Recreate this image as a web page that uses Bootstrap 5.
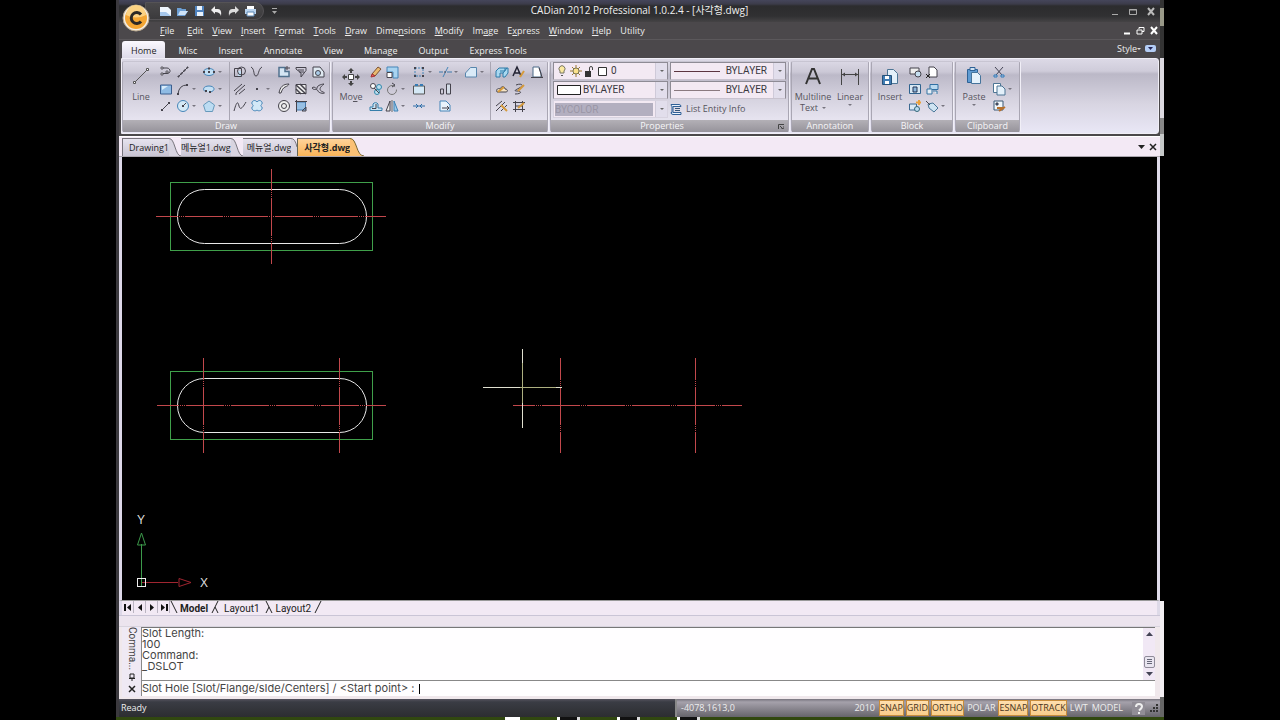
<!DOCTYPE html>
<html lang="en">
<head>
<meta charset="utf-8">
<meta name="viewport" content="width=device-width, initial-scale=1">
<title>CADian 2012 Professional 1.0.2.4 - [사각형.dwg]</title>
<link href="https://cdn.jsdelivr.net/npm/bootstrap@5.3.0/dist/css/bootstrap.min.css" rel="stylesheet">
<style>
:root{--ui:"Open Sans","Noto Sans CJK KR",sans-serif;--thin:Roboto,"Noto Sans CJK KR",sans-serif}
body{background:#000;font:9px/12px var(--ui);color:#eee}
button,select,input{font:inherit;color:inherit;background:none;border:0;padding:0;margin:0;border-radius:0}
a{color:inherit;text-decoration:none}
svg{display:block;flex:none}
.stage{height:100vh;padding:0 116px}
.work{min-height:0}
.behind{width:4px;background:linear-gradient(#333 0 8px,#998 8px 26px,#333 26px 58px,#dcd9e0 58px 118px,#888 118px 134px,#c5c8c8 134px 156px,#000 156px 601px,#f3eff3 601px 697px,#666 697px)}
.app{background:#4b484b;border-left:3px solid #3b393e;min-width:0}
.app-title{height:22px;background:linear-gradient(#45465b,#3c3c4a 4px,#2c2c2e 6px,#303032 16px,#454345 22px);font-size:10px;line-height:20px;color:#f0f0f0}
.quick{height:18px;margin-left:26px;margin-top:2px;padding:0 6px 0 13px;gap:4px;border-radius:0 9px 9px 0;background:linear-gradient(#4a494b,#3b3a3c);border:1px solid #555356}
.orb{left:3px;top:4px;width:28px;height:28px;z-index:3}
.app-menu{height:18px;gap:9px;padding:0 2px 0 41px;line-height:18px;border-bottom:1px solid #5b585b}
.app-menu a:first-child{margin-right:4px}
.app-menu u{text-underline-offset:1px}
.app-tabs{height:18px;line-height:22px}
.app-tabs a{padding:0 11px 0 10px}
.app-tabs a.on{background:linear-gradient(#fbf9ff,#dedbe9);color:#222;border-radius:3px 3px 0 0;padding:0 9px;margin:1px 3px 0 3px;line-height:20px}
.ribbon{height:76px;padding:2px 0 1px;gap:2px;margin:0 1px 0 2px;border:1px solid #f0eef6;border-radius:0 3px 3px 0;background:linear-gradient(#dcd9e6,#cfccda 12px,#bbb8c7 15px,#d8d5e2 45px,#e9e7f6)}
.panel{border:1px solid #a9a6b3;border-top-color:#c8c5d2;border-radius:2px;background:linear-gradient(#dad7e4,#cbc8d6 10px,#bcb9c8 13px,#d5d2df 36px,#e6e3ef 57px);box-shadow:1px 0 #f1eff7;color:#55535c}
.panel-body{height:58px}
.panel h2{font:9px/11px var(--ui);margin:0;height:12px;text-align:center;color:#f6f5f8;background:linear-gradient(#b3b0b6,#96939b)}
.w-draw{width:208px}.w-mod{width:216px}.w-prop{width:239px}.w-ann{width:78px}.w-blk{width:82px}.w-clip{width:65px}
.w-prop h2{padding-right:15px}
.big{line-height:12px;padding-top:3px;width:36px;display:flex;flex-direction:column;align-items:center}
.big svg{margin-bottom:4px}
.big .two{line-height:11px}
.big.wide{width:42px}.big.mid{width:32px}
.tools{display:grid;grid-auto-rows:17px;align-content:start;padding-top:1px}
.tools button{display:flex;align-items:center;height:17px;gap:2px}
.tools svg{fill:none;stroke:#45434c}
.car::after{content:"";border:2px solid transparent;border-top-color:#77747f;border-bottom:0}
.big.car::after{margin-top:2px}
.lightcar::after{border-top-color:#ddd}
.g-draw1{grid-template-columns:17px 26px 27px}
.g-draw2{grid-template-columns:17px 27px 17px 17px 14px;padding-left:3px;border-left:1px solid #a9a6b3}
.g-mod1{grid-template-columns:16px 27px 26px 26px 26px}
.g-mod2{grid-template-columns:17px 18px 14px;padding-left:4px;border-left:1px solid #a9a6b3}
.g-blk{grid-template-columns:17px 24px}
.props{display:grid;grid-template-columns:115px 116px;gap:1px 2px;padding:0 2px;align-content:start}
.combo{height:18px;background:#f3e9f3;border:1px solid #8e8b95;border-bottom-color:#c9c3cf;display:flex;align-items:center;padding-left:3px;gap:2px;font:10px/14px var(--thin);color:#3a383e}
.combo select{appearance:none;flex:1;min-width:0}
.combo.off{color:#9a96a6;border-color:#d8d3e0;padding-left:1px}
.combo.off select{background:#b3afc0;opacity:1;height:13px;line-height:13px}
.drop{width:12px;align-self:stretch;background:#e2deec;display:flex;align-items:center;justify-content:center;border-left:1px solid #cfcad9}
.drop::after{content:"";border:2px solid transparent;border-top-color:#666;border-bottom:0}
.rightsel{text-align:right;padding-right:4px}
.docbar{height:21px;margin-top:2px;padding:1px 2px 0 3px;background:#f3e9f5;border-bottom:1px solid #aaa6ae;color:#222;border-top:1px solid #fff}
.doctab{height:18px;background:linear-gradient(#e6e3ee,#c9c5d3);border-top:1px solid #77747c;line-height:18px;padding-left:6px}
.doctab:first-child{border-left:1px solid #77747c}
.doctab.on{background:linear-gradient(#ffd39a,#f9b458);border-left:1px solid #665;font-weight:700}
.inset-x{border-left:3px solid #ddd8e8;border-right:3px solid #dedae8}
.draw{background:#000;min-height:0;overflow:hidden}
.ucs{left:10px;bottom:0}
.sheets{height:15px;background:#f2e9f4;color:#222;border-top:1px solid #999}
.nav4 button{width:12px;height:12px;border-right:1px solid #bbb5c2;display:flex;align-items:center;justify-content:center}
.sheetname{font:10px/13px var(--thin);padding:0 2px}
.splitter{height:12px;background:#ece4ee;border-top:1px solid #cac5d6;border-bottom:1px solid #d8d4de}
.cmd{height:72px;background:#f0e8ec;color:#444;padding:0 5px 2px 3px;font:11px/11px Inter,sans-serif}
.cmd-side{width:19px;background:#efe9f4;font:10px/11px var(--thin)}
.vt{writing-mode:vertical-rl;line-height:12px;height:42px}
.hist{height:54px;border-top:1px solid #777;border-bottom:1px solid #888;border-left:1px solid #888;background:#fffeff}
.hist p{margin:0}
.scroll{width:12px;background:#f1e8f5}
.thumb{width:11px;height:12px;border:1px solid #8f8b99;border-radius:2px;background:#e9e5f0}
.prompt{height:15px;background:#fffeff;border-left:1px solid #888}
.prompt input{border-left:1px solid #000;height:10px;min-width:0;margin-left:5px;outline:0}
.status{height:18px;line-height:18px;background:linear-gradient(#55535e,#3a3c44 3px,#2c2d30);color:#eee}
.status .left{width:556px;padding-left:2px;flex:0 1 556px}
.status .right{background:linear-gradient(#77747e,#a5a1ab 3px,#66646b);border-left:2px solid #888;padding:0 1px 0 4px}
.modes{gap:2px}
.modes button{height:16px;line-height:14px;border:1px solid transparent}
.modes button.on{background:linear-gradient(#ffdfae,#f8cd8c);color:#4a3520;border-color:#c78c3b}
.wall{height:3px;background:#31480f;padding-left:389px;gap:37px}
.wall i{height:3px;background:linear-gradient(90deg,#fff 3px,#111 3px 20px,#ddd 20px);width:23px}
.wall i:first-child{background:#fff;width:15px}
</style>
</head>
<body>
<svg width="0" height="0" class="position-absolute" aria-hidden="true">
<defs>
<symbol id="pline" viewBox="0 0 14 14"><path d="M3 3h5a3 3 0 0 1 3 3.500a3 3 0 0 1-3 2H3"/><path d="M2 2h2v2H2zM2 8h2v2H2zM7 6h2v2H7z" fill="#ddd" stroke-width=".8"/></symbol>
<symbol id="xline" viewBox="0 0 14 14"><path d="M2 12L12 2"/><path d="M2 11h1v1H2zM11 2h1v1h-1zM5 8h1v1H5zM8 5h1v1H8z" fill="#555"/></symbol>
<symbol id="ell" viewBox="0 0 14 14"><ellipse cx="7" cy="7" rx="5.500" ry="3.500" fill="#c4e0f4" stroke="#4585b8"/><path d="M1 7h2M11 7h2M6 3.500h2M6 7h2" stroke-width="2"/></symbol>
<symbol id="rect" viewBox="0 0 14 14"><path d="M1.500 3h11v9h-11z" fill="#8fbbe4" stroke="#3c5f8f"/><path d="M3 4h6L3 8z" fill="#d9ecfa" stroke="none"/></symbol>
<symbol id="arc" viewBox="0 0 14 14"><path d="M2 12Q3 3 11 3"/><path d="M1 12h2M10 3h2" stroke-width="2"/></symbol>
<symbol id="earc" viewBox="0 0 14 14"><path d="M4 10C0 8 1 4 7 4s7 5 1 6" stroke="#4585b8" fill="#c4e0f4"/><path d="M3 9h2M7 10h2" stroke-width="2"/></symbol>
<symbol id="seg" viewBox="0 0 14 14"><path d="M3 11l7-7"/><path d="M2 11h2M9 4h2" stroke-width="2"/></symbol>
<symbol id="circ" viewBox="0 0 14 14"><circle cx="7" cy="7" r="5.500" fill="#d5e9f6" stroke="#4585b8"/><path d="M7 7l3-3"/><path d="M6 7h2" stroke-width="2"/></symbol>
<symbol id="pent" viewBox="0 0 14 14"><path d="M7 2l5.500 4-2 6.500h-7l-2-6.500z" fill="#bcdcf2" stroke="#6699bb"/></symbol>
<symbol id="region" viewBox="0 0 14 14"><path d="M5 6h4v5H5z" fill="#c4e0f4" stroke="none"/><path d="M1.500 3.500h7v8h-7z"/><circle cx="8.500" cy="6" r="4"/></symbol>
<symbol id="vee" viewBox="0 0 14 14"><path d="M1 2c4 2 2 9 5 9s2-7 6-9"/></symbol>
<symbol id="hatchl" viewBox="0 0 14 14"><path d="M1 9l8-7M3 11l9-8M6 12l6-5M2 12h2"/></symbol>
<symbol id="pt" viewBox="0 0 14 14"><path d="M6 7h2" stroke-width="2"/></symbol>
<symbol id="spl" viewBox="0 0 14 14"><path d="M1 12C4 1 5 3 6 7s3 3 7-4"/></symbol>
<symbol id="cloud" viewBox="0 0 14 14"><path d="M7 3c2-3 6-1 5 2-1 1-2 2 0 3 1 3-3 5-5 3-2 2-6 0-5-3 2-1 1-2 0-3-1-3 3-5 5-2z" fill="#d2e8f7" stroke="#4585b8"/></symbol>
<symbol id="bound" viewBox="0 0 14 14"><path d="M2 2.500h6v4h4v5H2z" fill="#d5e6f4" stroke="#51718e" stroke-width="1.500"/><path d="M10 1v4M8 3h5"/></symbol>
<symbol id="filt" viewBox="0 0 14 14"><path d="M2 2.500h10v3L7 12V8L2 4zM4 5h6M5 7h5"/></symbol>
<symbol id="wipe" viewBox="0 0 14 14"><path d="M2 2h7l4 5v5H2z" fill="#dfe9f1"/><circle cx="7" cy="8" r="2.500" fill="#aacce8"/></symbol>
<symbol id="trace" viewBox="0 0 14 14"><path d="M2 11C3 5 6 2 12 2c-1 2-2 2-4 3s-3 3-4 6z" fill="#eee"/></symbol>
<symbol id="hatch" viewBox="0 0 14 14"><path d="M2 2.500h10v9H2z" fill="#eee"/><path d="M2 3l10 9M6 2l6 6M2 7l5 5" stroke-width="1.500"/></symbol>
<symbol id="sketch" viewBox="0 0 14 14"><path d="M1 6c3-3 5 3 5 0s6-4 7-4c-4 3-6 6-1 8s-4 2-5-1-4 0-6-3z"/></symbol>
<symbol id="donut" viewBox="0 0 14 14"><circle cx="7" cy="7" r="5.500" fill="#eee"/><circle cx="7" cy="7" r="2.500"/></symbol>
<symbol id="grad" viewBox="0 0 14 14"><path d="M2.500 3h9v8h-9z" fill="#96bfe4" stroke="#4376a9"/><path d="M1 2.500h12M2.500 1v12M8 12l4-4v4z"/></symbol>
<symbol id="erase" viewBox="0 0 14 14"><path d="M3 9l6-7 3 2-6 7z" fill="#e9ba70" stroke="#7c5030"/><path d="M3 9l3 2-4 1z" fill="#e66060" stroke="#a33"/></symbol>
<symbol id="scale" viewBox="0 0 14 14"><path d="M2 2h11v11H8V7H2z" fill="#a8d3f0" stroke="#4585b8"/><path d="M2 7.500h5v5H2z" fill="#fff"/></symbol>
<symbol id="stretch" viewBox="0 0 14 14"><path d="M3 3h8v8H3z" stroke="#4585b8" stroke-dasharray="2 1"/><path d="M2 3h2M10 3h2M2 11h2M10 11h2" stroke-width="2"/></symbol>
<symbol id="trim" viewBox="0 0 14 14"><path d="M1 7h4M9 7h5" stroke="#3d78ac"/><path d="M5 12l5-10" stroke="#4585b8"/><path d="M6 7h2"/></symbol>
<symbol id="chamf" viewBox="0 0 14 14"><path d="M1.500 12V8l5-5.500h6V12z" fill="#d9eaf7" stroke="#5886ad"/></symbol>
<symbol id="copy2" viewBox="0 0 14 14"><circle cx="4" cy="4" r="2.500" fill="#fff"/><circle cx="10" cy="5" r="2.500" fill="#bde" stroke="#38a"/><circle cx="8" cy="10" r="2.500" fill="#bde" stroke="#38a"/><path d="M5 6l5 5"/></symbol>
<symbol id="rot" viewBox="0 0 14 14"><circle cx="7" cy="8" r="4.500" stroke-dasharray="24 3" stroke="#777"/><path d="M7 1l3 2-3 2"/></symbol>
<symbol id="brk" viewBox="0 0 14 14"><path d="M1.500 4h11v8h-11z" fill="#d4e8f5" stroke="#555"/><path d="M3 3h3M8 3h3" stroke="#367bb4" stroke-width="2"/></symbol>
<symbol id="align" viewBox="0 0 14 14"><path d="M2.500 7h3v5h-3z"/><path d="M8.500 2h4v10h-4z" fill="#d4dce7"/></symbol>
<symbol id="offset" viewBox="0 0 14 14"><path d="M1 11.500h12V9H9V5a3 3 0 0 0-5 0v3H1z" fill="#cbe3f3" stroke="#357eaa"/><path d="M3 9.500h4V5"/></symbol>
<symbol id="mirror" viewBox="0 0 14 14"><path d="M5 2v10H1z" fill="#eee"/><path d="M9 2v10h4z" fill="#9cc9e9" stroke="#3c82b5"/><path d="M7 1v12" stroke="#666"/></symbol>
<symbol id="join" viewBox="0 0 14 14"><path d="M1 7h12M4 5l2 2-2 2M10 5L8 7l2 2" stroke="#2e6fa8"/></symbol>
<symbol id="length" viewBox="0 0 14 14"><path d="M2 2h6l4 4v6H2z" fill="#e8f3fb" stroke="#4585b8"/><path d="M4 9h7M9 7l2 2-2 2"/></symbol>
<symbol id="solid" viewBox="0 0 14 14"><path d="M1 6l3-3h9v5l-3 4H8V8H5v4H1z" fill="#a8d8f0" stroke="#2f7ba8"/><path d="M5 6h5V3M8 8l4-5" stroke="#2f7ba8"/></symbol>
<symbol id="aedit" viewBox="0 0 14 14"><path d="M1 11L5 2l4 9M3 8h5" stroke="#223" stroke-width="1.500"/><path d="M8 12l4-6" stroke="#d69a3b" stroke-width="2"/></symbol>
<symbol id="sheet" viewBox="0 0 14 14"><path d="M3 2h6l2 6v4H3z" fill="#fff" stroke="#4c6a88"/><path d="M1 12.500h12M9 3l3 9"/></symbol>
<symbol id="cedit" viewBox="0 0 14 14"><path d="M2 10c-1-3 1-4 3-3 1-3 5-3 5 0 3 0 3 3 1 3z" fill="#f5e4c6"/><path d="M3 10l6-5" stroke="#d69a3b" stroke-width="2"/></symbol>
<symbol id="sedit" viewBox="0 0 14 14"><path d="M4 3c5-2 8 0 5 2S0 9 5 9s5 3-2 3"/><path d="M6 9l6-6" stroke="#d69a3b" stroke-width="2"/></symbol>
<symbol id="hedit" viewBox="0 0 14 14"><path d="M1 7l6-5M1 12l9-9M6 12l6-6"/><path d="M6 6l6 6" stroke="#d69a3b" stroke-width="2"/></symbol>
<symbol id="gedit" viewBox="0 0 14 14"><path d="M1 3.500h12M1 10.500h12M3.500 2v11M10.500 2v11M3 7h7"/><path d="M6 9l6-5" stroke="#d69a3b" stroke-width="2"/></symbol>
<symbol id="b1" viewBox="0 0 14 14"><path d="M2 3h9v6H2z" fill="#eee"/><circle cx="10" cy="9" r="3" fill="#c5dff1"/></symbol>
<symbol id="b2" viewBox="0 0 14 14"><path d="M4 2h5l3 3v7H4z" fill="#fff"/><path d="M1 9l4 4M1 13l4-4" stroke="#222"/></symbol>
<symbol id="b3" viewBox="0 0 14 14"><path d="M1.500 2.500h11v9h-11z" fill="#d8e8f3" stroke="#2f638f"/><path d="M5 5h4v5H5z" fill="#8cb8dc" stroke="#235"/></symbol>
<symbol id="b4" viewBox="0 0 14 14"><path d="M5 2.500h8v5H5z" fill="#b9d9ef" stroke="#2f6fa3"/><path d="M2 7h5v5H2zM8 9h4v3" fill="#e6eef5" stroke="#3474a3"/></symbol>
<symbol id="b5" viewBox="0 0 14 14"><path d="M1.500 5h7v6h-7z" fill="#d9e8f3" stroke="#3c6a91"/><circle cx="9" cy="10" r="2.500" fill="#bdddf1" stroke="#367"/><path d="M11 1v5M8 3.500h5" stroke="#eaa13a" stroke-width="2"/></symbol>
<symbol id="b6" viewBox="0 0 14 14"><path d="M3 5l5-1 5 5-4 4-5-4z" fill="#cfe4f2" stroke="#4a7698"/><path d="M1 2l4 4"/></symbol>
<symbol id="cut" viewBox="0 0 14 14"><path d="M3 2l7 8M11 2l-7 8" stroke="#445"/><path d="M2 10h3v2H2zM9 10h3v2H9z" stroke="#2e7fc0"/></symbol>
<symbol id="cpy" viewBox="0 0 14 14"><path d="M1.500 1.500h7v9h-7z" fill="#fff" stroke="#4d7594"/><path d="M5 4h5l3 3v6H5z" fill="#e3f0fa" stroke="#4d7594"/></symbol>
<symbol id="mp" viewBox="0 0 14 14"><path d="M2 2h9v9H2z" fill="#eef6fb" stroke="#3b5875"/><path d="M4 4h2v2H4z" fill="#36a"/><path d="M5 9h6M7 12l6-4" stroke="#b6702c" stroke-width="2"/></symbol>
</defs>
</svg>

<div class="stage d-flex flex-column">
<div class="work d-flex flex-grow-1">
<div class="app d-flex flex-column flex-grow-1 position-relative">
  <button class="orb position-absolute" aria-label="Application menu"><svg width="28" height="28" viewBox="0 0 28 28"><circle cx="14" cy="14" r="13" fill="#f5efe6" stroke="#b9a88c"/><circle cx="14" cy="14" r="11" fill="#f3a634"/><path d="M4 11a10 10 0 0 1 20 0Q14 16 4 11" fill="#fbd283"/><path d="M19 10.500A5.500 5.500 0 1 0 19 17.500" fill="none" stroke="#2b2926" stroke-width="3"/></svg></button>

  <header class="app-title d-flex position-relative">
    <div class="quick d-flex align-items-center">
      <button aria-label="New"><svg width="13" height="12"><path d="M1 2h8l3 3v6H1z" fill="#eef5fd"/><path d="M1 7h6l5 4H1z" fill="#a6c7ec"/></svg></button>
      <button aria-label="Open"><svg width="13" height="12"><path d="M1 10V3h4l1 1h4v2h2l-3 5H1z" fill="#6d9fd4"/><path d="M4 6h8L9 10H2z" fill="#cfe3f7"/></svg></button>
      <button aria-label="Save"><svg width="13" height="12"><path d="M2 1h9v10H2z" fill="#4f83bf"/><path d="M4 1h5v4H4zM4 7h6v4H4z" fill="#eaf3fc"/></svg></button>
      <button aria-label="Undo"><svg width="13" height="12"><path d="M1 5l4-4v3h3q4 0 3 7-1-4-6-4v2z" fill="#eee"/></svg></button>
      <button aria-label="Redo"><svg width="13" height="12"><path d="M12 5L8 1v3H5Q1 4 2 11q1-4 6-4v2z" fill="#ddd"/></svg></button>
      <button aria-label="Print"><svg width="13" height="12"><path d="M3 1h7v4H3z" fill="#fff"/><path d="M1 4h11v5H1z" fill="#b9d3ee"/><path d="M3 7h7v4H3z" fill="#fff" stroke="#5d88b5"/></svg></button>
    </div>
    <button class="px-2" aria-label="Customize"><svg width="5" height="6"><path d="M0 .5h5" stroke="#aaa"/><path d="M0 3h5L2.500 6z" fill="#aaa"/></svg></button>
    <div class="position-absolute start-0 end-0 text-center pe-none">CADian 2012 Professional 1.0.2.4 - [사각형.dwg]</div>
    <div class="ms-auto d-flex align-items-center gap-2 pe-1">
      <button aria-label="Minimize"><svg width="10" height="9"><path d="M2 7.500h6" stroke="#aaa"/></svg></button>
      <button aria-label="Maximize"><svg width="10" height="9"><path d="M1.500 2.500h7v5h-7zM1 3h8" fill="none" stroke="#aaa"/></svg></button>
      <button aria-label="Close"><svg width="10" height="9"><path d="M2 1l6 7M8 1L2 8" stroke="#bbb" stroke-width="2"/></svg></button>
    </div>
  </header>

  <nav class="app-menu d-flex">
    <a href="#"><u>F</u>ile</a><a href="#"><u>E</u>dit</a><a href="#"><u>V</u>iew</a><a href="#"><u>I</u>nsert</a><a href="#">F<u>o</u>rmat</a><a href="#"><u>T</u>ools</a><a href="#"><u>D</u>raw</a><a href="#">Dime<u>n</u>sions</a><a href="#"><u>M</u>odify</a><a href="#">Im<u>a</u>ge</a><a href="#">E<u>x</u>press</a><a href="#"><u>W</u>indow</a><a href="#"><u>H</u>elp</a><a href="#">Utility</a>
    <div class="ms-auto d-flex align-items-center gap-1">
      <button aria-label="Minimize drawing"><svg width="9" height="9"><path d="M1 7.500h6" stroke="#fff" stroke-width="2"/></svg></button>
      <button aria-label="Restore drawing"><svg width="9" height="9"><path d="M3 3V1.500h5v4H6M1 4h5v4H1z" fill="none" stroke="#fff"/></svg></button>
      <button aria-label="Close drawing"><svg width="9" height="9"><path d="M2 1l6 7M8 1L2 8" stroke="#fff" stroke-width="2"/></svg></button>
    </div>
  </nav>

  <nav class="app-tabs d-flex">
    <a href="#" class="on">Home</a><a href="#">Misc</a><a href="#">Insert</a><a href="#">Annotate</a><a href="#">View</a><a href="#">Manage</a><a href="#">Output</a><a href="#">Express Tools</a>
    <div class="ms-auto d-flex align-items-center gap-1 pe-1"><button class="car lightcar d-flex align-items-center">Style</button>
    <button aria-label="Minimize ribbon"><svg width="11" height="8"><rect width="11" height="7" rx="2" fill="#b4cdf5"/><path d="M3 2h5L5.500 5z" fill="#225"/></svg></button></div>
  </nav>

  <div class="ribbon d-flex">
    <section class="panel w-draw">
      <div class="panel-body d-flex">
        <button class="big"><svg width="18" height="22"><path d="M3 17L15 5" stroke="#555"/><path d="M1.500 16.500h2v2h-2zM14.500 3.500h2v2h-2z" fill="#fff" stroke="#555"/></svg>Line</button>
        <div class="tools g-draw1">
          <button aria-label="Polyline"><svg width="14" height="14"><use href="#pline"/></svg></button><button aria-label="Infinite line"><svg width="14" height="14"><use href="#xline"/></svg></button><button class="car" aria-label="Ellipse"><svg width="14" height="14"><use href="#ell"/></svg></button>
          <button aria-label="Rectangle"><svg width="14" height="14"><use href="#rect"/></svg></button><button class="car" aria-label="Arc"><svg width="14" height="14"><use href="#arc"/></svg></button><button class="car" aria-label="Elliptical arc"><svg width="14" height="14"><use href="#earc"/></svg></button>
          <button aria-label="Ray"><svg width="14" height="14"><use href="#seg"/></svg></button><button class="car" aria-label="Circle"><svg width="14" height="14"><use href="#circ"/></svg></button><button class="car" aria-label="Polygon"><svg width="14" height="14"><use href="#pent"/></svg></button>
        </div>
        <div class="tools g-draw2">
          <button><svg width="14" height="14"><use href="#region"/></svg></button><button><svg width="14" height="14"><use href="#vee"/></svg></button><button><svg width="14" height="14"><use href="#bound"/></svg></button><button><svg width="14" height="14"><use href="#filt"/></svg></button><button><svg width="14" height="14"><use href="#wipe"/></svg></button>
          <button><svg width="14" height="14"><use href="#hatchl"/></svg></button><button class="car"><svg width="14" height="14"><use href="#pt"/></svg></button><button><svg width="14" height="14"><use href="#trace"/></svg></button><button><svg width="14" height="14"><use href="#hatch"/></svg></button><button><svg width="14" height="14"><use href="#sketch"/></svg></button>
          <button><svg width="14" height="14"><use href="#spl"/></svg></button><button><svg width="14" height="14"><use href="#cloud"/></svg></button><button><svg width="14" height="14"><use href="#donut"/></svg></button><button><svg width="14" height="14"><use href="#grad"/></svg></button>
        </div>
      </div>
      <h2>Draw</h2>
    </section>

    <section class="panel w-mod">
      <div class="panel-body d-flex">
        <button class="big"><svg width="20" height="22"><path d="M7.500 9.500h5v5h-5z" fill="#fff" stroke="#444"/><path d="M10 3l3 3h-2v2H9V6H7zM10 21l3-3h-2v-2H9v2H7zM1 12l3-3v2h2v2H4v2zM19 12l-3-3v2h-2v2h2v2z" fill="#444"/></svg><span>Mo<u>v</u>e</span></button>
        <div class="tools g-mod1">
          <button><svg width="14" height="14"><use href="#erase"/></svg></button><button><svg width="14" height="14"><use href="#scale"/></svg></button><button class="car"><svg width="14" height="14"><use href="#stretch"/></svg></button><button class="car"><svg width="14" height="14"><use href="#trim"/></svg></button><button class="car"><svg width="14" height="14"><use href="#chamf"/></svg></button>
          <button><svg width="14" height="14"><use href="#copy2"/></svg></button><button class="car"><svg width="14" height="14"><use href="#rot"/></svg></button><button><svg width="14" height="14"><use href="#brk"/></svg></button><button><svg width="14" height="14"><use href="#align"/></svg></button><span></span>
          <button><svg width="14" height="14"><use href="#offset"/></svg></button><button class="car"><svg width="14" height="14"><use href="#mirror"/></svg></button><button><svg width="14" height="14"><use href="#join"/></svg></button><button><svg width="14" height="14"><use href="#length"/></svg></button>
        </div>
        <div class="tools g-mod2">
          <button><svg width="14" height="14"><use href="#solid"/></svg></button><button><svg width="14" height="14"><use href="#aedit"/></svg></button><button><svg width="14" height="14"><use href="#sheet"/></svg></button>
          <button><svg width="14" height="14"><use href="#cedit"/></svg></button><button><svg width="14" height="14"><use href="#sedit"/></svg></button><span></span>
          <button><svg width="14" height="14"><use href="#hedit"/></svg></button><button><svg width="14" height="14"><use href="#gedit"/></svg></button>
        </div>
      </div>
      <h2>Modify</h2>
    </section>

    <section class="panel w-prop">
      <div class="panel-body props">
        <div class="combo"><svg width="52" height="14"><path d="M3 7a3 3 0 1 1 4 0v2H3z" fill="#fbe9a0" stroke="#776"/><path d="M4 11.500h2" stroke="#555"/><path d="M19 1v12M13 7h12M15 3l8 8M23 3l-8 8" stroke="#a07a30"/><circle cx="19" cy="7" r="3" fill="#fce28c" stroke="#775"/><path d="M28 7h6v6h-6z" fill="#333"/><path d="M32.500 7V4a1.500 1.500 0 0 1 3 0v2" fill="none" stroke="#444"/><path d="M41.500 3.500h8v8h-8z" fill="#fff" stroke="#333"/></svg><select aria-label="Layer"><option>0</option></select><span class="drop"></span></div>
        <div class="combo"><svg width="46" height="3"><path d="M0 1.500h46" stroke="#5c3540"/></svg><select class="rightsel" aria-label="Linetype"><option>BYLAYER</option></select><span class="drop"></span></div>
        <div class="combo"><svg width="24" height="12"><path d="M.5 1.500h23v9H.5z" fill="#fff" stroke="#222"/></svg><select aria-label="Color"><option>BYLAYER</option></select><span class="drop"></span></div>
        <div class="combo"><svg width="46" height="3"><path d="M0 1.500h46" stroke="#8a7a80"/></svg><select class="rightsel" aria-label="Lineweight"><option>BYLAYER</option></select><span class="drop"></span></div>
        <div class="combo off"><select aria-label="Plot style" disabled><option>BYCOLOR</option></select><span class="drop"></span></div>
        <button class="d-flex align-items-center gap-1"><svg width="12" height="12"><path d="M1 1.500h8q2 0 2 2H3v6h8v2H3q-2 0-2-2h1V3q-1 0-1-1.500z" fill="#eaf3fb" stroke="#2f5f96"/><path d="M5 5.500h5M5 7.500h5" stroke="#357"/></svg>List Entity Info</button>
      </div>
      <h2 class="position-relative">Properties<button class="position-absolute end-0 top-0 p-1" aria-label="Properties settings"><svg width="6" height="5"><path d="M.5 5V.5H6M2 2l3 3M6 2v3H3" fill="none" stroke="#444"/></svg></button></h2>
    </section>

    <section class="panel w-ann">
      <div class="panel-body d-flex">
        <button class="big wide"><svg width="18" height="22"><path d="M2 19L8 4h2l6 15M5 13.500h8" fill="none" stroke="#333" stroke-width="2"/></svg><span class="two">Multiline</span><span class="two car d-flex align-items-center gap-1">Text</span></button>
        <button class="big mid car"><svg width="20" height="22"><path d="M1.500 4v16M18.500 4v16M2 9.500h16" stroke="#444"/><path d="M2 9.500l3-2v4zM18 9.500l-3-2v4z" fill="#444"/></svg><span class="two">Linear</span></button>
      </div>
      <h2>Annotation</h2>
    </section>

    <section class="panel w-blk">
      <div class="panel-body d-flex">
        <button class="big"><svg width="18" height="22"><path d="M6.500 4.500h6l4 4v10h-10z" fill="#e3f0fa" stroke="#4d7594"/><path d="M1.500 10.500h9v9h-9z" fill="#3f7cb4" stroke="#25527c"/><path d="M4 11h4v3H4zM4 16h4v3H4z" fill="#fff"/></svg><span class="two">Insert</span></button>
        <div class="tools g-blk">
          <button><svg width="14" height="14"><use href="#b1"/></svg></button><button><svg width="14" height="14"><use href="#b2"/></svg></button>
          <button><svg width="14" height="14"><use href="#b3"/></svg></button><button><svg width="14" height="14"><use href="#b4"/></svg></button>
          <button><svg width="14" height="14"><use href="#b5"/></svg></button><button class="car"><svg width="14" height="14"><use href="#b6"/></svg></button>
        </div>
      </div>
      <h2>Block</h2>
    </section>

    <section class="panel w-clip">
      <div class="panel-body d-flex">
        <button class="big car"><svg width="18" height="22"><path d="M2.500 4.500h10v13h-10z" fill="#5f9bd2" stroke="#2e6296"/><path d="M5 2.500h5v3H5z" fill="#cfe2f3" stroke="#2e6296"/><path d="M6.500 7.500h6l3 3v8h-9z" fill="#e4f1fb" stroke="#46749c"/></svg><span class="two">Paste</span></button>
        <div class="tools">
          <button><svg width="14" height="14"><use href="#cut"/></svg></button><button class="car"><svg width="14" height="14"><use href="#cpy"/></svg></button><button><svg width="14" height="14"><use href="#mp"/></svg></button>
        </div>
      </div>
      <h2>Clipboard</h2>
    </section>
  </div>

  <nav class="docbar d-flex">
    <button class="doctab">Drawing1</button><svg width="12" height="18"><path d="M0 .5C6 0 6 18 12 18H0z" fill="#d8d4e0"/><path d="M0 .5C6 0 6 18 12 18" fill="none" stroke="#77747c"/></svg>
    <button class="doctab ps-0">메뉴얼1.dwg</button><svg width="12" height="18"><path d="M0 .5C6 0 6 18 12 18H0z" fill="#d8d4e0"/><path d="M0 .5C6 0 6 18 12 18" fill="none" stroke="#77747c"/></svg>
    <button class="doctab ps-1">메뉴얼.dwg</button><svg width="6" height="18"><path d="M0 .5Q4 0 6 9v9H0z" fill="#d8d4e0"/><path d="M0 .5Q4 0 6 9" fill="none" stroke="#77747c"/></svg>
    <button class="doctab on">사각형.dwg</button><svg width="14" height="18"><path d="M0 .5C7 0 6 18 14 18H0z" fill="#fbc175"/><path d="M0 .5C7 0 6 18 14 18" fill="none" stroke="#77652c"/></svg>
    <div class="ms-auto d-flex align-items-center gap-1"><button aria-label="Drawing list"><svg width="7" height="4"><path d="M0 0h7L3.500 4z" fill="#222"/></svg></button><button aria-label="Close drawing"><svg width="9" height="8"><path d="M1 1l6 6M7 1L1 7" stroke="#222" stroke-width="1.500"/></svg></button></div>
  </nav>

  <main class="draw inset-x flex-grow-1 position-relative">
    <svg width="100%" height="100%" fill="none" shape-rendering="crispEdges">
      <g stroke="#3f9f4a"><rect x="48.500" y="25.500" width="202" height="68"/><rect x="48.500" y="214.500" width="202" height="68"/></g>
      <g stroke="#e8e8e8" shape-rendering="auto"><rect x="55.500" y="32.500" width="189" height="54" rx="27"/><rect x="55.500" y="221.500" width="189" height="54" rx="27"/></g>
      <g stroke="#c2484c">
        <path d="M34 59.500h230M35 248.500h229M391 248.500h229" stroke-dasharray="22 1 1 1 1 1 1 1 16 0"/>
        <path d="M149.500 12v95M81.500 201v95M217.500 201v95M438.500 201v95M573.500 201v95" stroke-dasharray="22 1 1 1 1 1 1 1 38 1 1 1 1 1 1 1 30"/>
      </g>
      <path d="M361 230.500h79M400.500 192v79" stroke="#e0e0d0"/>
      <path d="M400.500 206v40M398 230.500h36" stroke="#adb080"/>
    </svg>
    <svg class="ucs position-absolute" width="80" height="91" viewBox="0 -6 80 91" fill="none" shape-rendering="crispEdges">
      <path d="M9.500 71V29" stroke="#3c9a4b"/><path d="M9.500 18l4 12h-8z" stroke="#3c9a4b" shape-rendering="auto"/>
      <path d="M10 67.500h36" stroke="#a02530"/><path d="M47 63.500l12 4-12 4z" stroke="#a02530" shape-rendering="auto"/>
      <rect x="5.500" y="63.500" width="8" height="8" stroke="#eee"/>
      <text x="5" y="9" fill="#ddd" font-family="Liberation Sans,sans-serif" font-size="12">Y</text><text x="68" y="72" fill="#ddd" font-family="Liberation Sans,sans-serif" font-size="12">X</text>
    </svg>
  </main>

  <nav class="sheets inset-x d-flex">
    <div class="nav4 d-flex"><button aria-label="First"><svg width="8" height="7"><path d="M1 0v7" stroke="#111" stroke-width="2"/><path d="M7 0v7L3 3.500z" fill="#111"/></svg></button><button aria-label="Previous"><svg width="8" height="7"><path d="M6 0v7L2 3.500z" fill="#111"/></svg></button><button aria-label="Next"><svg width="8" height="7"><path d="M2 0v7l4-3.500z" fill="#111"/></svg></button><button aria-label="Last"><svg width="8" height="7"><path d="M7 0v7" stroke="#111" stroke-width="2"/><path d="M1 0v7l4-3.500z" fill="#111"/></svg></button></div>
    <svg width="8" height="12"><path d="M1 0l6 12" stroke="#222"/></svg>
    <button class="sheetname fw-bold">Model</button><svg width="12" height="12"><path d="M8 0L2 12M5 6l3 6" stroke="#222"/></svg>
    <button class="sheetname">Layout1</button><svg width="12" height="12"><path d="M7 6L4 12M4 0l6 12" stroke="#222"/></svg>
    <button class="sheetname">Layout2</button><svg width="10" height="12"><path d="M8 0L2 12" stroke="#222"/></svg>
  </nav>
  <div class="splitter"></div>

  <section class="cmd d-flex">
    <div class="cmd-side d-flex flex-column align-items-center gap-1"><span class="vt">Comma...</span><button aria-label="Pin"><svg width="8" height="8"><path d="M2 1h4v4H2zM1 5.500h6M4 5v3" fill="none" stroke="#222"/></svg></button><button aria-label="Close"><svg width="8" height="8"><path d="M1 1l6 6M7 1L1 7" stroke="#222" stroke-width="1.500"/></svg></button></div>
    <div class="flex-grow-1">
      <div class="hist d-flex"><div class="flex-grow-1"><p>Slot Length:</p><p>100</p><p>Command:</p><p>_DSLOT</p></div>
        <div class="scroll d-flex flex-column align-items-center py-1"><button aria-label="Scroll up"><svg width="7" height="4"><path d="M0 4h7L3.500 0z" fill="#445"/></svg></button><span class="thumb mt-auto mb-1 d-flex align-items-center justify-content-center"><svg width="5" height="6"><path d="M0 .5h5M0 2.500h5M0 4.500h5" stroke="#667"/></svg></span><button aria-label="Scroll down"><svg width="7" height="4"><path d="M0 0h7L3.500 4z" fill="#445"/></svg></button></div></div>
      <div class="prompt d-flex align-items-center"><label for="cmdline">Slot Hole [Slot/Flange/sIde/Centers] / &lt;Start point&gt; :</label><input id="cmdline" type="text" class="flex-grow-1"></div>
    </div>
  </section>

  <footer class="status d-flex">
    <div class="left">Ready</div>
    <div class="right d-flex flex-grow-1 align-items-center"><span class="me-auto">-4078,1613,0</span><span class="me-1">2010</span>
      <div class="modes d-flex"><button class="on">SNAP</button><button class="on">GRID</button><button class="on">ORTHO</button><button>POLAR</button><button class="on">ESNAP</button><button class="on">OTRACK</button><button>LWT</button><button>MODEL</button></div>
      <button class="ms-2" aria-label="Help"><svg width="13" height="13"><rect width="13" height="13" fill="#918d96"/><path d="M4 5q0-3 3-3t3 2.500q0 1.500-3 4M7 10v2" fill="none" stroke="#eee" stroke-width="2"/></svg></button>
      <svg class="ms-1" width="10" height="10"><path d="M7 2h2M4 5h2M7 5h2M1 8h2M4 8h2M7 8h2" stroke="#333" stroke-width="2"/></svg></div>
  </footer>
</div>
<div class="behind"></div>
</div>
<div class="wall d-flex"><i></i><i></i><i></i><i></i></div>
</div>
<script src="https://cdn.jsdelivr.net/npm/bootstrap@5.3.0/dist/js/bootstrap.bundle.min.js"></script>
</body>
</html>
